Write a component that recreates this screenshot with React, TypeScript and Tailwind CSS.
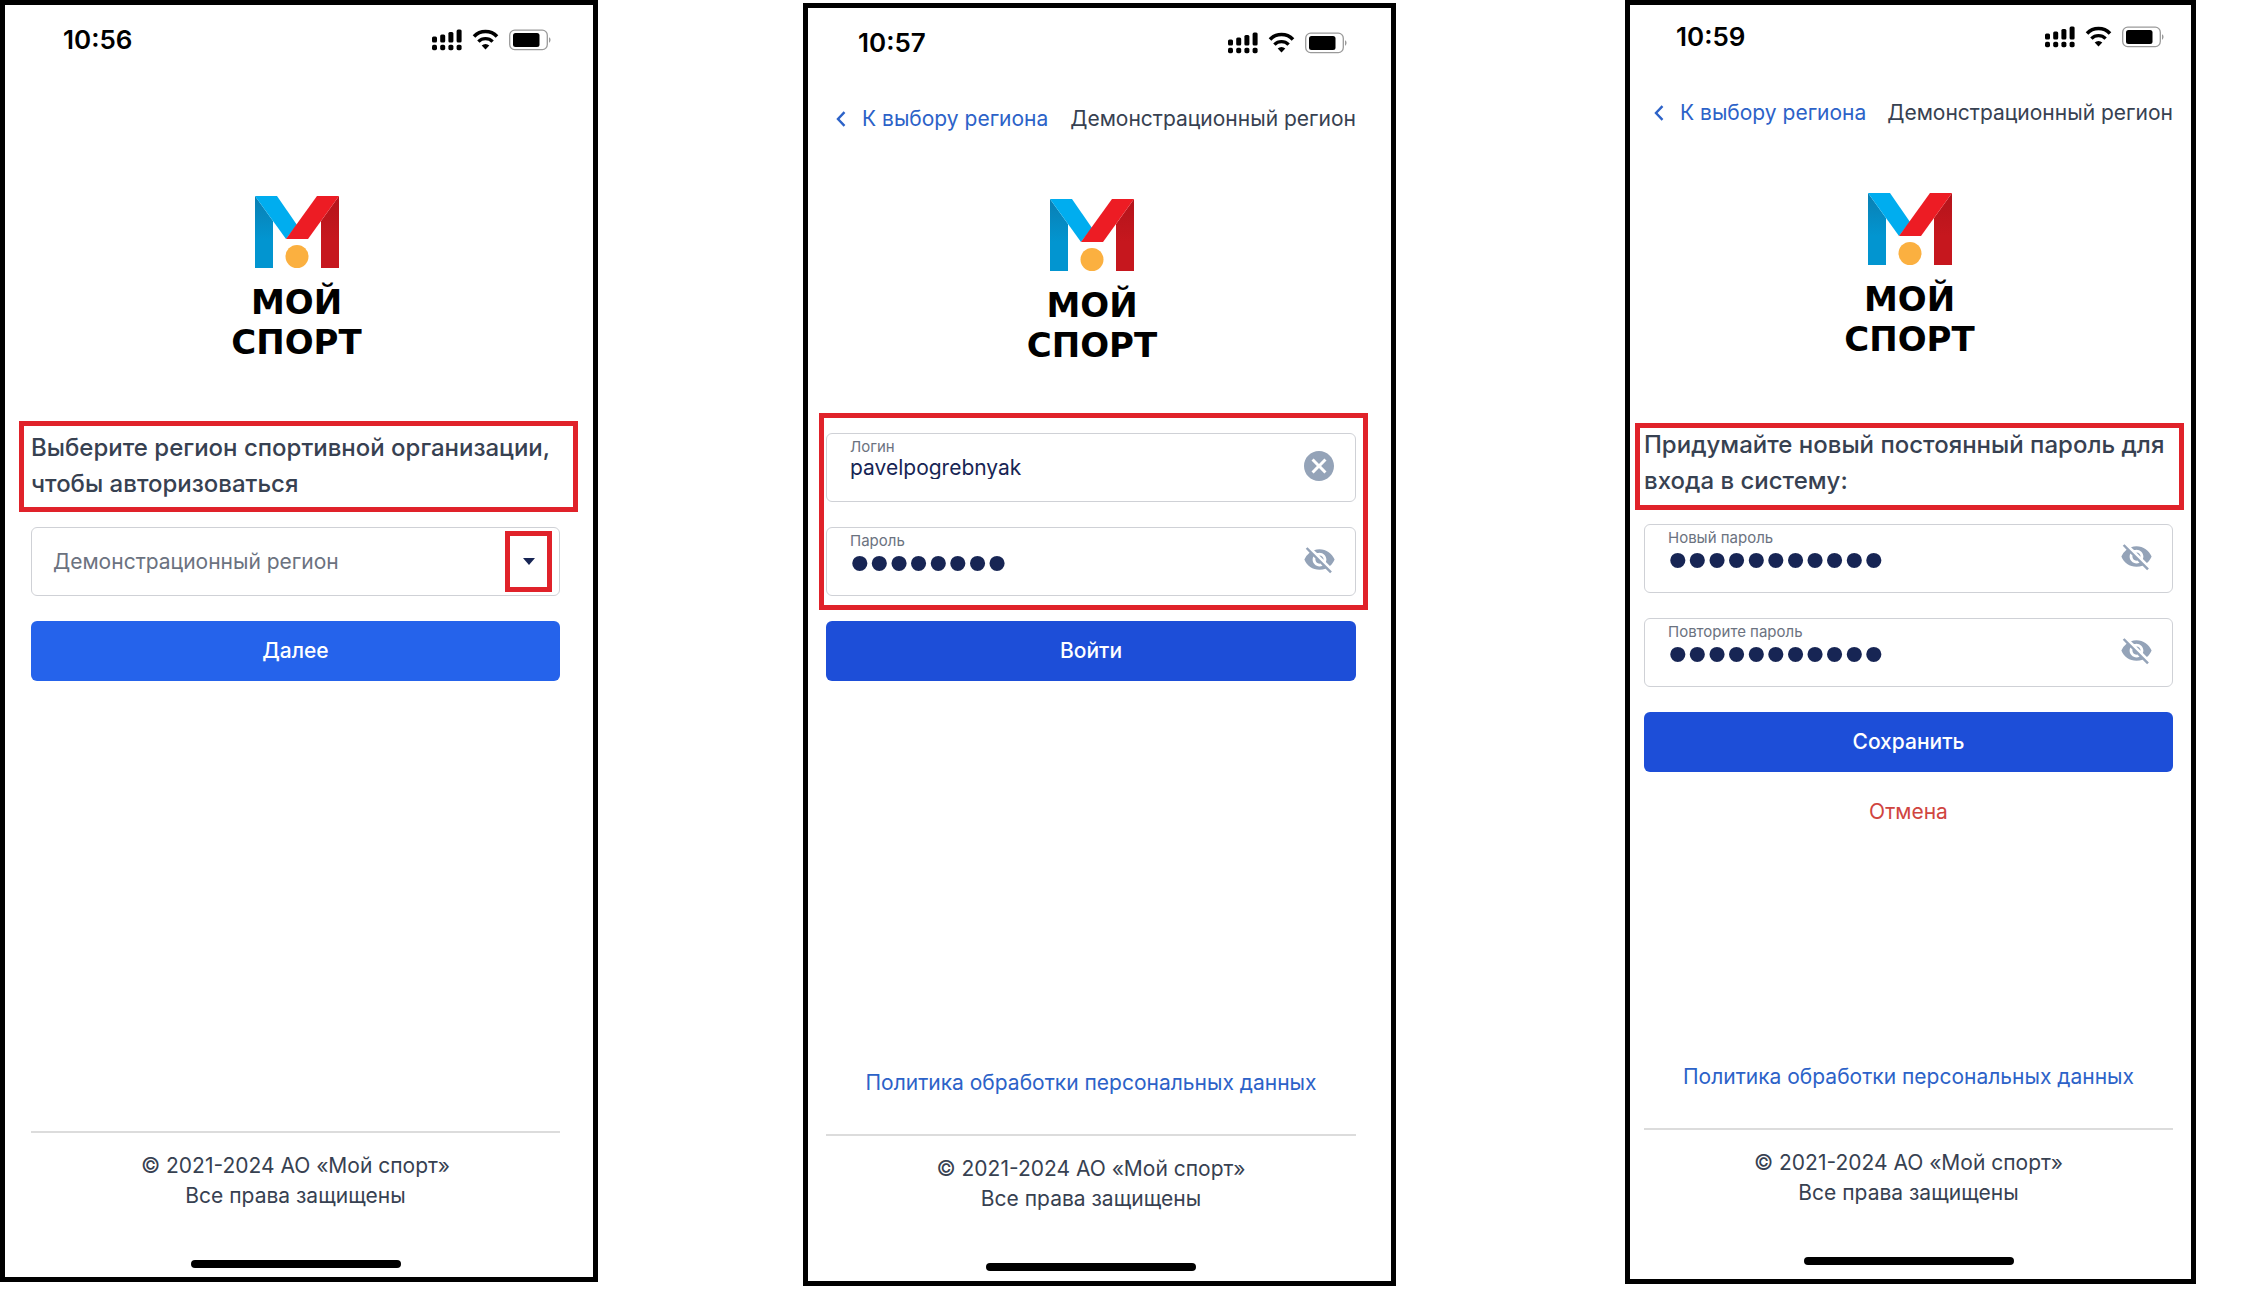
import { useState } from 'react';
import type { ReactNode } from 'react';
import clsx from 'clsx';
import { MdCancel, MdVisibility, MdVisibilityOff } from 'react-icons/md';

function StatusIcons() {
  return (
    <svg width="120" height="22" viewBox="0 0 120 22" role="img" aria-label="Сигнал, Wi-Fi, батарея">
      {/* Dual SIM signal */}
      <rect x="1" y="7.5" width="5" height="6" rx="1.5" />
      <rect x="9.2" y="5.5" width="5" height="8" rx="1.5" />
      <rect x="17.4" y="3" width="5" height="10.5" rx="1.5" />
      <rect x="25.6" y="0.5" width="5" height="13" rx="1.5" />
      <rect x="1" y="15.7" width="5" height="5.6" rx="1.7" />
      <rect x="9.2" y="15.7" width="5" height="5.6" rx="1.7" />
      <rect x="17.4" y="15.7" width="5" height="5.6" rx="1.7" />
      <rect x="25.6" y="15.7" width="5" height="5.6" rx="1.7" />
      {/* Wi-Fi */}
      <path d="M43 7.4a16 16 0 0 1 23 0" fill="none" stroke="#000" strokeWidth="3.6" />
      <path d="M47.4 12.6a10 10 0 0 1 14.200 0" fill="none" stroke="#000" strokeWidth="3.4" />
      <path d="M54.5 20.4l-3.800-3.900a5.400 5.400 0 0 1 7.600 0z" />
      {/* Battery */}
      <rect x="78.700" y="1.200" width="37.600" height="19.400" rx="5" fill="none" stroke="#9a9a9a" strokeWidth="1.3" />
      <rect x="82" y="4" width="26.500" height="14" rx="2.500" />
      <path d="M118 8.300c2 .8 2 4.600 0 5.400z" fill="#9a9a9a" />
    </svg>
  );
}

function Logo() {
  return (
    <div className="mt-16 flex flex-col items-center pl-0.5">
      <svg width="84" height="72" viewBox="0 0 84 72" aria-hidden="true">
        <defs>
          <linearGradient id="fold-blue" x1="0" y1="0" x2="0" y2="1">
            <stop offset="0" stopColor="#0a7fb3" />
            <stop offset="0.6" stopColor="#0295d0" />
          </linearGradient>
          <linearGradient id="fold-red" x1="0" y1="0" x2="0" y2="1">
            <stop offset="0" stopColor="#b3141b" />
            <stop offset="0.6" stopColor="#c6171e" />
          </linearGradient>
        </defs>
        <path d="M0 0L18 25V72H0z" fill="url(#fold-blue)" />
        <path d="M84 0L66 25V72H84z" fill="url(#fold-red)" />
        <path d="M0 0H22L42 29L31 43z" fill="#00adef" />
        <path d="M84 0H62L31 43H53z" fill="#ed1c24" />
        <circle cx="42" cy="60.500" r="11.500" fill="#fbb040" />
      </svg>
      <p className="mt-3.5 text-center font-['DejaVu_Sans',sans-serif] text-[34px] leading-10 font-bold text-black">
        МОЙ
        <br />
        СПОРТ
      </p>
    </div>
  );
}

function BackNav() {
  return (
    <>
      <a href="#region" className="flex items-center gap-4 text-[#2c62c8]">
        <svg width="10" height="16" viewBox="0 0 10 16" fill="none" stroke="currentColor" strokeWidth="2.400" aria-hidden="true">
          <path d="M8.500 1.200L2 8l6.500 6.800" />
        </svg>
        К выбору региона
      </a>
      <span>Демонстрационный регион</span>
    </>
  );
}

interface FieldProps {
  id: string;
  label: string;
  initial: string;
  secret?: boolean;
}

function Field({ id, label, initial, secret }: FieldProps) {
  const [value, setValue] = useState(initial);
  const [visible, setVisible] = useState(!secret);

  return (
    <div className="flex h-[69px] items-center rounded-md border border-[#cfd1d6] pr-[18px] pl-[23px]">
      <div className="flex h-full min-w-0 flex-1 flex-col pt-[3px]">
        <label htmlFor={id} className="text-[15px] leading-5 text-[#6b7280]">
          {label}
        </label>
        <input
          id={id}
          type={visible ? 'text' : 'password'}
          value={value}
          onChange={(e) => setValue(e.target.value)}
          className={clsx(
            'h-[22px] w-full text-[#172554] outline-none',
            visible ? 'text-[21px] leading-[22px]' : "font-['Liberation_Sans',sans-serif] text-[56px] leading-[22px]"
          )}
        />
      </div>
      {secret ? (
        <button
          type="button"
          onClick={() => setVisible(!visible)}
          aria-label={visible ? 'Скрыть пароль' : 'Показать пароль'}
          className="flex w-9 justify-center pb-1 text-[#94a3b8]"
        >
          {visible ? <MdVisibility size={33} /> : <MdVisibilityOff size={33} />}
        </button>
      ) : (
        <button
          type="button"
          onClick={() => setValue('')}
          aria-label="Очистить"
          className="flex w-9 justify-center pb-1 text-[#94a3b8]"
        >
          <MdCancel size={36} />
        </button>
      )}
    </div>
  );
}

function RegionSelect() {
  return (
    <div className="relative">
      <select
        aria-label="Регион"
        className="h-[69px] w-full appearance-none rounded-md border border-[#cfd1d6] bg-white pl-[21px] text-[#6b7280]"
      >
        <option>Демонстрационный регион</option>
      </select>
      <span className="pointer-events-none absolute inset-y-1 right-2 flex w-[47px] items-center justify-center border-[5px] border-[#e0222a]">
        <svg width="12" height="7" viewBox="0 0 12 7" fill="#172554" aria-hidden="true">
          <path d="M0 0h12L6 7z" />
        </svg>
      </span>
    </div>
  );
}

// Red frame drawn around the highlighted part of a screen
function Marker({ className }: { className: string }) {
  return <div className={clsx('pointer-events-none absolute border-[5px] border-[#e0222a]', className)} />;
}

interface ScreenProps {
  time: string;
  nav?: ReactNode;
  policy?: boolean;
  className: string;
  children: ReactNode;
}

function Screen({ time, nav, policy, className, children }: ScreenProps) {
  return (
    <section className={clsx('flex flex-col border-[5px] border-black', className)}>
      <div className="flex h-10 items-center justify-between pr-[9px] pl-8">
        <span className="text-[26px] leading-10 font-semibold text-black">{time}</span>
        <StatusIcons />
      </div>
      <nav className="mt-10 flex h-8 items-center justify-between pl-2.5 leading-8">{nav}</nav>
      <Logo />
      <div className="mt-[68px] flex flex-col">{children}</div>

      <footer className="mt-auto flex flex-col items-center">
        {policy && (
          <a href="#policy" className="mb-[35px] leading-8 text-[#2c62c8]">
            Политика обработки персональных данных
          </a>
        )}
        <p className="w-full border-t-2 border-[#dcdcdc] pt-[18px] text-center leading-[30px]">
          © 2021-2024 АО «Мой спорт»
          <br />
          Все права защищены
        </p>
        <div className="mt-[49px] h-2 w-[210px] rounded-full bg-black" />
      </footer>
    </section>
  );
}

const buttonStyle = 'mt-[25px] h-[60px] rounded-md font-medium text-white';
const titleStyle = 'text-2xl leading-9 font-medium';

export default function App() {
  return (
    <main className="grid min-h-screen grid-cols-[598fr_205fr_593fr_229fr_571fr_66fr] bg-white font-[Inter,sans-serif] text-[21px] text-[#374151]">
      <Screen time="10:56" className="col-start-1 mb-3 pt-[15px] pr-[33px] pb-[9px] pl-[26px]">
        <div className="relative">
          <h1 className={titleStyle}>Выберите регион спортивной организации, чтобы авторизоваться</h1>
          <Marker className="-top-[9px] -right-[18px] -bottom-2.5 -left-3" />
        </div>
        <div className="mt-[25px] flex flex-col">
          <RegionSelect />
          <button type="button" className={clsx(buttonStyle, 'bg-[#2563eb]')}>
            Далее
          </button>
        </div>
      </Screen>

      <Screen
        time="10:57"
        nav={<BackNav />}
        policy
        className="col-start-3 mt-[3px] mb-2 pt-[15px] pr-[35px] pb-2.5 pl-[18px]"
      >
        <div className="relative flex flex-col gap-[25px]">
          <Field id="login" label="Логин" initial="pavelpogrebnyak" />
          <Field id="password" label="Пароль" initial="12345678" secret />
          <Marker className="-top-5 -right-3 -bottom-3.5 -left-[7px]" />
        </div>
        <button type="button" className={clsx(buttonStyle, 'bg-[#1d4ed8]')}>
          Войти
        </button>
      </Screen>

      <Screen
        time="10:59"
        nav={<BackNav />}
        policy
        className="col-start-5 mb-2.5 pt-3 pr-[18px] pb-3.5 pl-3.5"
      >
        <div className="relative">
          <h1 className={titleStyle}>Придумайте новый постоянный пароль для входа в систему:</h1>
          <Marker className="-top-1 -right-[11px] -bottom-[11px] -left-[9px]" />
        </div>
        <div className="mt-[25px] flex flex-col gap-[25px]">
          <Field id="new-password" label="Новый пароль" initial="12345678901" secret />
          <Field id="repeat-password" label="Повторите пароль" initial="12345678901" secret />
        </div>
        <button type="button" className={clsx(buttonStyle, 'bg-[#1d4ed8]')}>
          Сохранить
        </button>
        <button type="button" className="mt-6 self-center leading-8 text-[#d0453f]">
          Отмена
        </button>
      </Screen>
    </main>
  );
}
